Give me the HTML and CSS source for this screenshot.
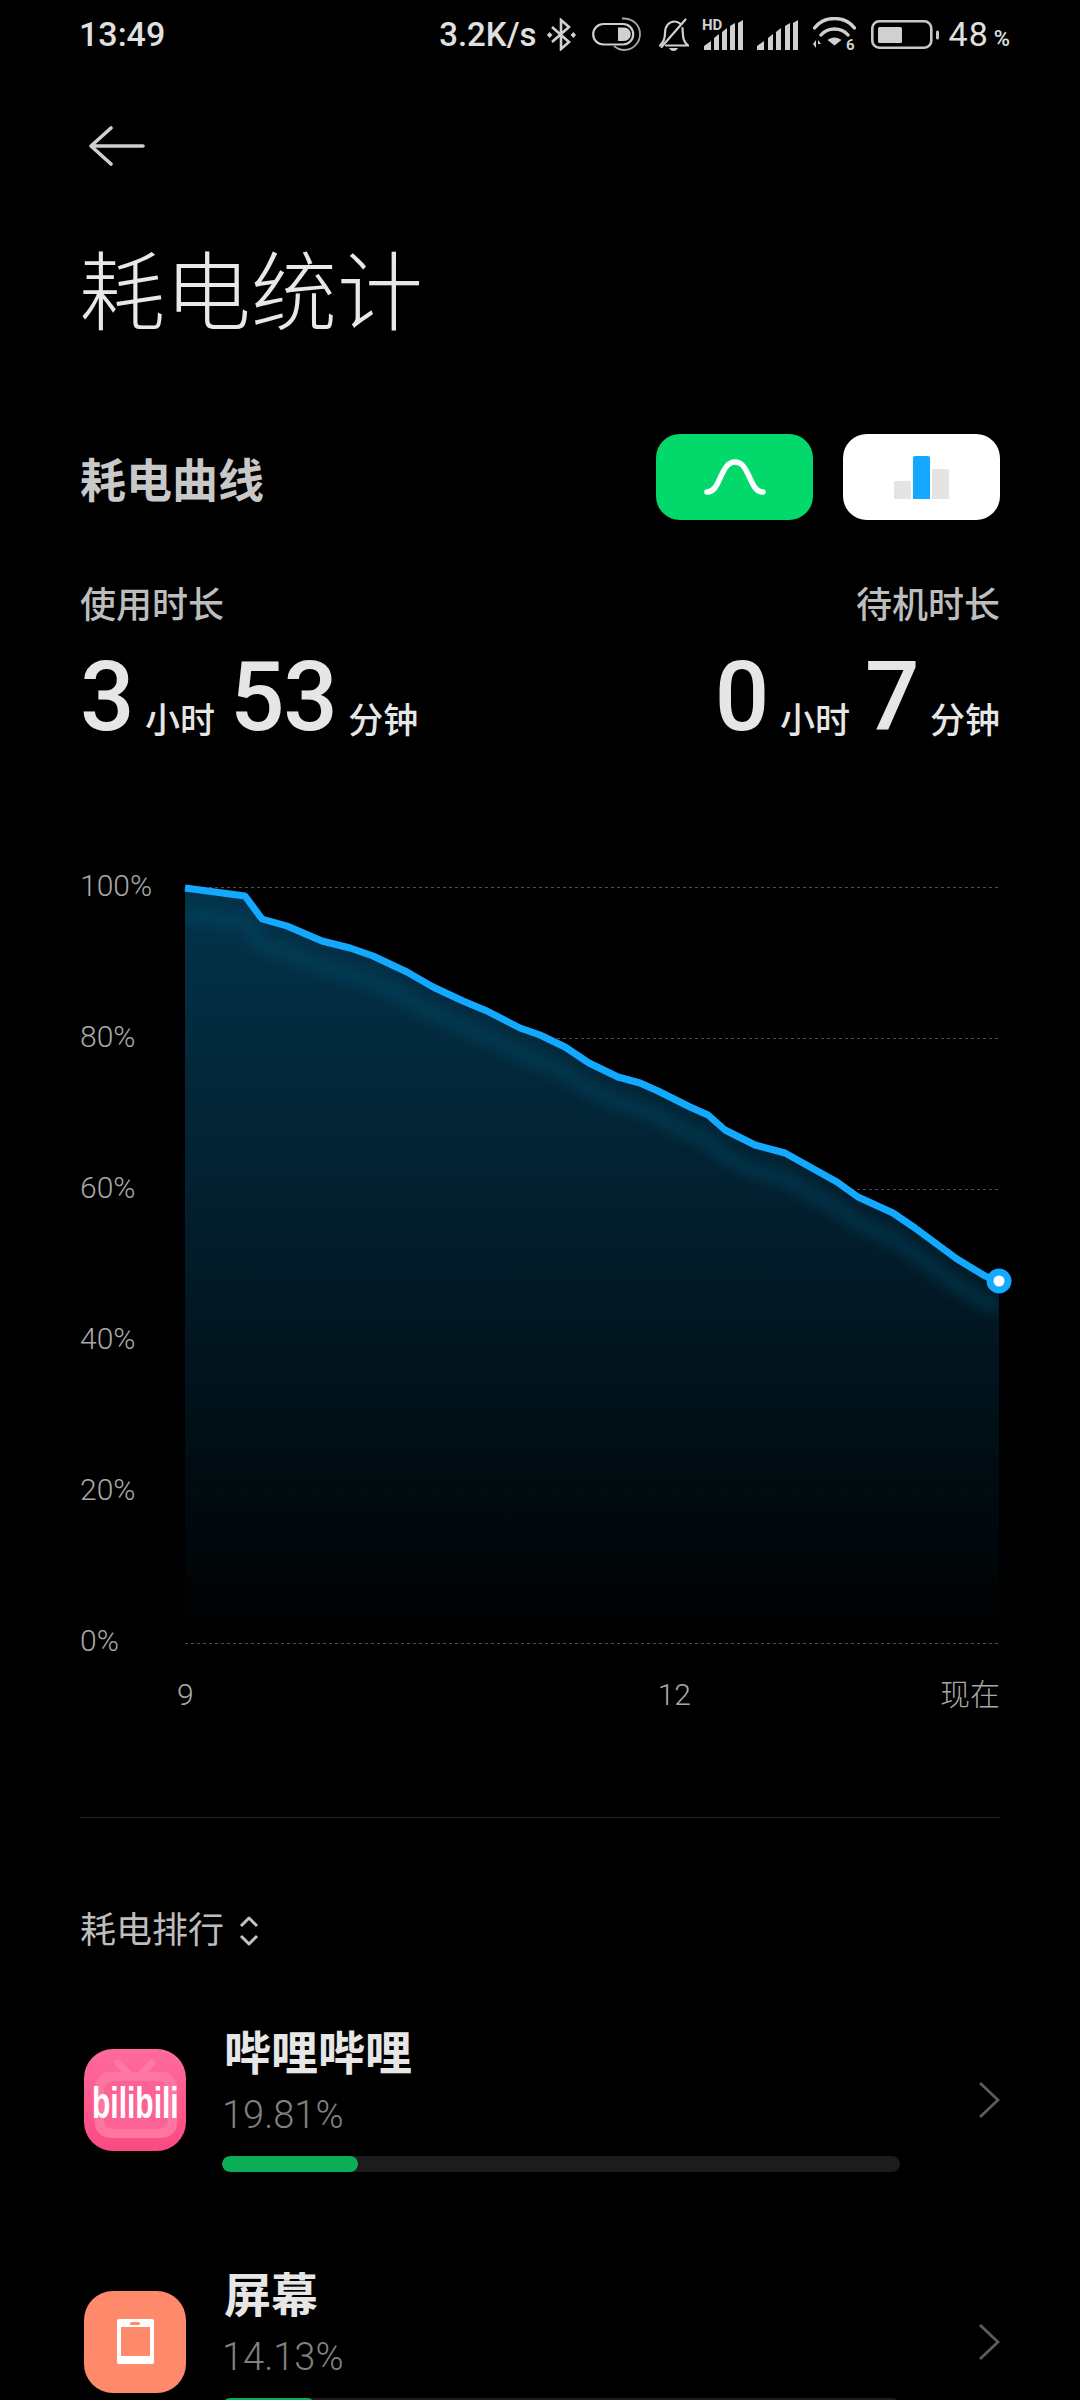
FILE: index.html
```html
<!DOCTYPE html>
<html lang="zh-CN">
<head>
    <meta charset="UTF-8">
    <meta name="viewport" content="width=device-width, initial-scale=1.0">
    <title>耗电统计</title>
    <link rel="stylesheet" href="styles.css">
</head>
<body>
    <div class="statusbar">
        <span class="clock">13:49</span>
        <div class="status-right">
            <span class="speed">3.2K/s</span>
            <svg class="st-bt" width="29" height="33" viewBox="0 0 29 33"><path d="M5 9l17 15-8 7V2l8 7L5 24" fill="none" stroke="#d0d0d0" stroke-width="2.6"/><path d="M2.500 14l3 3-3 3-2.500-3zM26.500 14l2.500 3-2.500 3-3-3z" fill="#d0d0d0"/></svg>
            <svg class="st-toggle" width="49" height="34" viewBox="0 0 49 34"><rect x="1.200" y="7" width="40" height="20.500" rx="10.200" fill="none" stroke="#d0d0d0" stroke-width="2.200"/><path d="M26 10.500h6a6.800 6.800 0 0 1 0 13.600h-6z" fill="#d0d0d0"/><path d="M30 1.500C42 1 48 9 48 17c0 9-7 16-16 16-4 0-7-1.500-10-4" fill="none" stroke="#a8a8a8" stroke-width="1.800"/></svg>
            <svg class="st-bell" width="31" height="33" viewBox="0 0 31 33"><path d="M24.500 10C25 19 25 24 30 27.500H8M2 27.500C6 24 7 20 7 15 7 8 11 3.500 16.500 3.500c2.500 0 4.500 1 6 2.500" fill="none" stroke="#d0d0d0" stroke-width="2.200" stroke-linecap="round"/><path d="M27.500 1.500L3.500 29" stroke="#d0d0d0" stroke-width="2.200" stroke-linecap="round"/><path d="M11 30h9c-1 2-2.500 3-4.500 3S12 32 11 30z" fill="#d0d0d0"/></svg>
            <svg class="st-signal" width="42" height="36" viewBox="0 -6 42 36"><text x="0" y="10" class="hd-text">HD</text><path d="M2 30v-4l7-5v9zM12 30V18l5-4v16zM20 30V12l5-4v22zM28 30V6l5-3v27zM36 30V3l5-3v30z" fill="#d0d0d0"/></svg>
            <svg class="st-signal" width="42" height="36" viewBox="0 -6 42 36"><path d="M0 30v-4l7-5v9zM11 30V18l5-4v16zM19 30V12l5-4v22zM28 30V6l5-3v27zM36 30V3l5-3v30z" fill="#d0d0d0"/></svg>
            <svg class="st-wifi" width="43" height="40" viewBox="0 0 43 40"><path d="M1.500 11C6 5 13 1.500 21.500 1.500S37 5 41.500 11M8 18c3.500-4 8-6 13.500-6s10 2 13.500 6" fill="none" stroke="#d0d0d0" stroke-width="3.400" stroke-linecap="round"/><path d="M14.500 23c4-3.500 10-3.500 14 0l-7 5.500z" fill="#d0d0d0"/><path d="M3 24v8l-3-4zM5 24l3 4H5v4z" fill="#d0d0d0" transform="translate(0 -1)"/><text x="33" y="33" class="wifi-text">6</text></svg>
            <svg class="st-battery" width="68" height="29" viewBox="0 0 68 29"><rect x="1.300" y="1.300" width="59" height="26.400" rx="7" fill="none" stroke="#c8c8c8" stroke-width="2.600"/><rect x="7" y="7" width="24" height="16" rx="1.500" fill="#d0d0d0"/><rect x="65" y="10.500" width="3" height="9" rx="1.500" fill="#c8c8c8"/></svg>
            <span class="level">48<small>%</small></span>
        </div>
    </div>

    <div class="container">
        <div class="back">
            <svg width="58" height="40" viewBox="0 0 58 40"><path d="M23 2L3 20l20 18M3 20h52" fill="none" stroke="#cfcfcf" stroke-width="3.600" stroke-linecap="round" stroke-linejoin="round"/></svg>
        </div>

        <h1>耗电统计</h1>

        <div class="curve-head">
            <h2>耗电曲线</h2>
            <div class="switcher">
                <div class="tab tab-green">
                    <svg width="62" height="36" viewBox="0 0 62 36"><path d="M3 33c14 0 13-30 28-30s14 30 28 30" fill="none" stroke="#fff" stroke-width="5.500" stroke-linecap="round"/></svg>
                </div>
                <div class="tab tab-white">
                    <div class="mini-bars">
                        <div class="mini-bar bar-low"></div>
                        <div class="mini-bar bar-top"></div>
                        <div class="mini-bar bar-mid"></div>
                    </div>
                </div>
            </div>
        </div>

        <div class="usage">
            <div class="usage-col">
                <div class="usage-label">使用时长</div>
                <div class="usage-value"><b>3</b><span>小时</span><b>53</b><span>分钟</span></div>
            </div>
            <div class="usage-col usage-right">
                <div class="usage-label">待机时长</div>
                <div class="usage-value"><b>0</b><span>小时</span><b>7</b><span>分钟</span></div>
            </div>
        </div>

        <div class="chart">
            <div class="y-axis">
                <span>100%</span>
                <span>80%</span>
                <span>60%</span>
                <span>40%</span>
                <span>20%</span>
                <span>0%</span>
            </div>
            <svg class="plot" width="860" height="790" viewBox="170 870 860 790">
                <defs>
                    <linearGradient id="area-fill" x1="0" y1="887" x2="0" y2="1640" gradientUnits="userSpaceOnUse">
                        <stop offset="0" stop-color="#033750"/>
                        <stop offset="0.5" stop-color="#021d2b"/>
                        <stop offset="1" stop-color="#000"/>
                    </linearGradient>
                    <filter id="soft" x="-5%" y="-5%" width="110%" height="110%">
                        <feGaussianBlur stdDeviation="6"/>
                    </filter>
                    <clipPath id="area-clip">
                        <path d="M185 888L245 896 262 919 287 926 322 941 350 948 373 956 407 972 433 987 463 1001 487 1011 520 1028 540 1035 565 1047 589 1063 618 1077 640 1083 658 1091 690 1107 708 1115 725 1130 755 1145 785 1153 837 1182 858 1197 893 1213 915 1228 957 1259 985 1276 999 1281V1643H185z"/>
                    </clipPath>
                </defs>
                <g class="grid">
                    <line x1="185" y1="887.500" x2="999" y2="887.500"/>
                    <line x1="185" y1="1038.500" x2="999" y2="1038.500"/>
                    <line x1="185" y1="1189.500" x2="999" y2="1189.500"/>
                    <line x1="185" y1="1340.500" x2="999" y2="1340.500"/>
                    <line x1="185" y1="1491.500" x2="999" y2="1491.500"/>
                    <line x1="185" y1="1643.500" x2="999" y2="1643.500"/>
                </g>
                <path d="M185 888L245 896 262 919 287 926 322 941 350 948 373 956 407 972 433 987 463 1001 487 1011 520 1028 540 1035 565 1047 589 1063 618 1077 640 1083 658 1091 690 1107 708 1115 725 1130 755 1145 785 1153 837 1182 858 1197 893 1213 915 1228 957 1259 985 1276 999 1281V1643H185z" fill="url(#area-fill)" fill-opacity="0.94"/>
                <g clip-path="url(#area-clip)">
                    <path d="M185 914L245 922 262 945 287 952 322 967 350 974 373 982 407 998 433 1013 463 1027 487 1037 520 1054 540 1061 565 1073 589 1089 618 1103 640 1109 658 1117 690 1133 708 1141 725 1156 755 1171 785 1179 837 1208 858 1223 893 1239 915 1254 957 1285 985 1302 999 1307" fill="none" stroke="#06506f" stroke-opacity="0.35" stroke-width="16" filter="url(#soft)"/>
                </g>
                <polyline points="185,888 245,896 262,919 287,926 322,941 350,948 373,956 407,972 433,987 463,1001 487,1011 520,1028 540,1035 565,1047 589,1063 618,1077 640,1083 658,1091 690,1107 708,1115 725,1130 755,1145 785,1153 837,1182 858,1197 893,1213 915,1228 957,1259 985,1276 999,1281" fill="none" stroke="#12a9ff" stroke-width="7" stroke-linejoin="round"/>
                <circle cx="999" cy="1281" r="12.500" fill="#12a9ff"/>
                <circle cx="999" cy="1281" r="5.500" fill="#fff"/>
            </svg>
        </div>

        <div class="x-axis">
            <span class="tick-nine">9</span>
            <span class="tick-twelve">12</span>
            <span class="tick-now">现在</span>
        </div>

        <div class="divider"></div>

        <div class="rank-head">
            <span>耗电排行</span>
            <svg width="20" height="30" viewBox="0 0 20 30"><path d="M2 10l8-8 8 8M2 20l8 8 8-8" fill="none" stroke="#c4c4c4" stroke-width="3" stroke-linejoin="round"/></svg>
        </div>

        <div class="app-row">
            <svg class="app-icon" width="102" height="102" viewBox="0 0 102 102">
                <defs>
                    <linearGradient id="bili-bg" x1="0" y1="0" x2="0" y2="1">
                        <stop offset="0" stop-color="#ff6b9c"/>
                        <stop offset="1" stop-color="#fb4a81"/>
                    </linearGradient>
                </defs>
                <rect width="102" height="102" rx="29" fill="url(#bili-bg)"/>
                <path d="M34 14l10 10M68 14L58 24" stroke="#fd7aa5" stroke-width="7" stroke-linecap="round"/>
                <rect x="11" y="23" width="82" height="66" rx="15" fill="#fd76a1"/>
                <rect x="20" y="32" width="64" height="48" rx="9" fill="#fc6293"/>
                <text class="bili-text" transform="translate(8 69) scale(1 1.5)">bilibili</text>
            </svg>
            <div class="app-info">
                <div class="app-name">哔哩哔哩</div>
                <div class="app-percent">19.81%</div>
                <div class="track"><div class="track-fill" style="width: 20%"></div></div>
            </div>
            <svg class="chevron" width="22" height="38" viewBox="0 0 22 38"><path d="M2 2l18 17L2 36" fill="none" stroke="#5c5c5c" stroke-width="2.800"/></svg>
        </div>

        <div class="app-row">
            <svg class="app-icon" width="102" height="102" viewBox="0 0 102 102">
                <rect width="102" height="102" rx="29" fill="#ff8a6b"/>
                <rect x="33" y="28" width="37" height="45" rx="2" fill="#fff"/>
                <rect x="37" y="36" width="29" height="29" fill="#ff8a6b"/>
                <rect x="46" y="31" width="10" height="3" rx="1.500" fill="#ff8a6b"/>
            </svg>
            <div class="app-info">
                <div class="app-name">屏幕</div>
                <div class="app-percent">14.13%</div>
                <div class="track"><div class="track-fill" style="width: 13.7%"></div></div>
            </div>
            <svg class="chevron" width="22" height="38" viewBox="0 0 22 38"><path d="M2 2l18 17L2 36" fill="none" stroke="#5c5c5c" stroke-width="2.800"/></svg>
        </div>
    </div>
</body>
</html>
```

FILE: styles.css
```css
html, body {
    margin: 0;
    height: 2400px;
    overflow: hidden;
    background: #000;
}

body {
    font-family: 'Roboto', 'Noto Sans CJK SC', sans-serif;
    color: #e6e6e6;
}

/* Status bar */
.statusbar {
    height: 68px;
    padding: 0 69px 0 79px;
    display: flex;
    align-items: center;
    justify-content: space-between;
    color: #e0e0e0;
}

.clock {
    font-size: 34px;
    font-weight: 500;
}

.status-right {
    display: flex;
    align-items: center;
}

.speed {
    font-size: 33px;
    font-weight: 500;
}

.status-right svg {
    display: block;
}

.st-bt { margin-left: 10px; }
.st-toggle { margin-left: 16px; }
.st-bell { margin-left: 17px; }
.st-signal { margin-left: 13px; margin-top: -4px; }
.st-wifi { margin-left: 14px; margin-top: 5px; }
.st-battery { margin-left: 15px; }

.hd-text {
    font-size: 15px;
    font-weight: 700;
    fill: #d0d0d0;
}

.wifi-text {
    font-size: 15px;
    font-weight: 700;
    fill: #d0d0d0;
}

.level {
    margin-left: 10px;
    font-size: 34px;
    font-weight: 400;
    letter-spacing: 1px;
}

.level small {
    margin-left: 5px;
    font-size: 22px;
    font-weight: 500;
}

/* Page */
.container {
    padding: 0 80px;
}

.back {
    padding-top: 58px;
    margin-left: 8px;
    height: 40px;
}

.back svg {
    display: block;
}

h1 {
    margin: 79px 0 0 -1px;
    font-size: 86px;
    line-height: 100px;
    font-weight: 200;
    color: #e8e8e8;
}

.curve-head {
    margin-top: 89px;
    display: flex;
    align-items: center;
    justify-content: space-between;
}

h2 {
    margin: 0;
    font-size: 46px;
    font-weight: 700;
    color: #c8c8c8;
}

.switcher {
    display: flex;
    gap: 30px;
}

.tab {
    width: 157px;
    height: 86px;
    border-radius: 24px;
    display: flex;
    align-items: center;
    justify-content: center;
}

.tab-green {
    background: #03d96b;
}

.tab-white {
    background: #fff;
}

.mini-bars {
    display: flex;
    align-items: flex-end;
    gap: 2px;
    height: 43px;
}

.mini-bar {
    width: 17px;
    border-radius: 2px 2px 0 0;
    background: #e4e4e4;
}

.bar-low { height: 18px; }
.bar-top { height: 43px; background: #12a9ff; }
.bar-mid { height: 30px; }

.usage {
    margin-top: 61px;
    display: flex;
    justify-content: space-between;
}

.usage-right {
    text-align: right;
}

.usage-label {
    font-size: 36px;
    line-height: 50px;
    font-weight: 500;
    color: #bdbdbd;
}

.usage-value {
    margin-top: 10px;
    display: flex;
    align-items: baseline;
}

.usage-right .usage-value {
    justify-content: flex-end;
}

.usage-value b {
    font-size: 96px;
    line-height: 112px;
    font-weight: 500;
    letter-spacing: -1.500px;
}

.usage-value span {
    font-size: 35px;
    font-weight: 500;
    margin: 0 15px 0 12px;
    transform: translateY(3px);
}

.usage-value span:last-child {
    margin-right: 0;
}

/* Chart */
.chart {
    margin-top: 117px;
    display: flex;
}

.y-axis {
    width: 90px;
    flex: none;
    margin-top: 1px;
    display: flex;
    flex-direction: column;
    gap: 121px;
    font-size: 30px;
    line-height: 30px;
    font-weight: 300;
    color: #a8a8a8;
}

.plot {
    display: block;
    flex: none;
}

.grid line {
    stroke: #4e4e4e;
    stroke-width: 1;
    stroke-dasharray: 3 3;
}

.x-axis {
    margin-top: 17px;
    display: flex;
    font-size: 30px;
    line-height: 36px;
    font-weight: 300;
    color: #a8a8a8;
}

.tick-nine { margin-left: 97px; }
.tick-twelve { margin-left: 464px; }
.tick-now { margin-left: auto; }

.divider {
    margin-top: 104px;
    height: 1px;
    background: #242424;
}

.rank-head {
    margin-top: 88px;
    display: flex;
    align-items: center;
    gap: 15px;
    font-size: 36px;
    line-height: 50px;
    color: #bdbdbd;
}

/* App rows */
.app-row {
    height: 242px;
    display: flex;
    align-items: flex-start;
}

.rank-head + .app-row {
    margin-top: 23px;
}

.app-icon {
    display: block;
    flex: none;
    margin: 70px 0 0 4px;
}

.bili-text {
    font-family: 'Liberation Sans', sans-serif;
    font-size: 30px;
    font-weight: 700;
    fill: #fff;
}

.app-info {
    width: 678px;
    margin-left: 36px;
    padding-top: 45px;
}

.app-name {
    font-size: 47px;
    line-height: 60px;
    font-weight: 700;
    margin-left: 2px;
}

.app-percent {
    margin-top: 8px;
    font-size: 38px;
    line-height: 46px;
    font-weight: 300;
    color: #808080;
}

.track {
    margin-top: 18px;
    height: 16px;
    border-radius: 8px;
    background: #1c1c1c;
    overflow: hidden;
}

.track-fill {
    height: 100%;
    border-radius: 8px;
    background: #0aaf55;
}

.chevron {
    display: block;
    margin: 102px 0 0 auto;
}
```
